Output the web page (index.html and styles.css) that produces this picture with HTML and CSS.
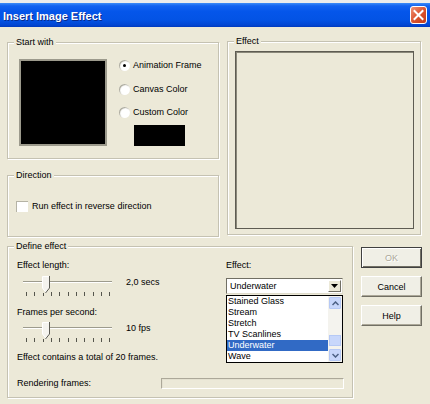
FILE: index.html
```html
<!DOCTYPE html>
<html lang="en">
<head>
    <meta charset="UTF-8">
    <title>Insert Image Effect</title>
    <link rel="stylesheet" href="styles.css">
</head>
<body>
    <div class="window">
        <div class="top-strip"></div>
        <div class="titlebar">
            <span class="title">Insert Image Effect</span>
            <svg class="close-btn" width="17" height="18" viewBox="0 0 17 18">
                <defs>
                    <linearGradient id="closeGrad" x1="0" y1="0" x2="1" y2="1">
                        <stop offset="0" stop-color="#f0957a"/>
                        <stop offset="0.5" stop-color="#dc5530"/>
                        <stop offset="1" stop-color="#c23a17"/>
                    </linearGradient>
                </defs>
                <rect x="0.5" y="0.5" width="16" height="17" rx="2.5" fill="url(#closeGrad)" stroke="#fff"/>
                <path d="M4.5 5 L12.5 13 M12.5 5 L4.5 13" stroke="#fff" stroke-width="2" stroke-linecap="square"/>
            </svg>
        </div>

        <div class="main">
            <div class="row">
                <div class="col-left">
                    <div class="group start-group">
                        <span class="group-label">Start with</span>
                        <div class="preview"></div>
                        <div class="radio-list">
                            <div class="radio-row"><span class="radio checked"></span>Animation Frame</div>
                            <div class="radio-row"><span class="radio"></span>Canvas Color</div>
                            <div class="radio-row"><span class="radio"></span>Custom Color</div>
                            <div class="swatch"></div>
                        </div>
                    </div>
                    <div class="group direction-group">
                        <span class="group-label">Direction</span>
                        <div class="check-row"><span class="checkbox"></span>Run effect in reverse direction</div>
                    </div>
                </div>
                <div class="group effect-group">
                    <span class="group-label">Effect</span>
                    <div class="effect-frame"></div>
                </div>
            </div>

            <div class="row row-bottom">
                <div class="group define-group">
                    <span class="group-label">Define effect</span>
                    <div class="define-body">
                        <div class="define-left">
                            <p class="label">Effect length:</p>
                            <div class="slider-row">
                                <svg class="slider" width="92" height="22" viewBox="0 0 92 22">
                                    <line x1="0" y1="6.5" x2="89" y2="6.5" stroke="#9d9b8d"/>
                                    <line x1="0" y1="7.5" x2="89" y2="7.5" stroke="#fff"/>
                                    <path d="M19.5 1.5 H26.5 V13 L23 17.5 L19.5 13 Z" fill="#f4f3ee" stroke="#fff"/>
                                    <path d="M26.5 1 V13 L22.5 18" fill="none" stroke="#5a5a52"/>
                                    <g stroke="#55554d">
                                        <line x1="3.5" y1="17" x2="3.5" y2="21"/>
                                        <line x1="11.5" y1="17" x2="11.5" y2="21"/>
                                        <line x1="20.5" y1="18" x2="20.5" y2="21"/>
                                        <line x1="28.5" y1="17" x2="28.5" y2="21"/>
                                        <line x1="36.5" y1="17" x2="36.5" y2="21"/>
                                        <line x1="45.5" y1="17" x2="45.5" y2="21"/>
                                        <line x1="53.5" y1="17" x2="53.5" y2="21"/>
                                        <line x1="61.5" y1="17" x2="61.5" y2="21"/>
                                        <line x1="70.5" y1="17" x2="70.5" y2="21"/>
                                        <line x1="78.5" y1="17" x2="78.5" y2="21"/>
                                        <line x1="86.5" y1="17" x2="86.5" y2="21"/>
                                    </g>
                                </svg>
                                <span class="slider-value">2,0 secs</span>
                            </div>
                            <p class="label label-fps">Frames per second:</p>
                            <div class="slider-row slider-row-tight">
                                <svg class="slider" width="92" height="22" viewBox="0 0 92 22">
                                    <line x1="0" y1="6.5" x2="89" y2="6.5" stroke="#9d9b8d"/>
                                    <line x1="0" y1="7.5" x2="89" y2="7.5" stroke="#fff"/>
                                    <path d="M19.5 1.5 H26.5 V13 L23 17.5 L19.5 13 Z" fill="#f4f3ee" stroke="#fff"/>
                                    <path d="M26.5 1 V13 L22.5 18" fill="none" stroke="#5a5a52"/>
                                    <g stroke="#55554d">
                                        <line x1="3.5" y1="17" x2="3.5" y2="21"/>
                                        <line x1="11.5" y1="17" x2="11.5" y2="21"/>
                                        <line x1="20.5" y1="18" x2="20.5" y2="21"/>
                                        <line x1="28.5" y1="17" x2="28.5" y2="21"/>
                                        <line x1="36.5" y1="17" x2="36.5" y2="21"/>
                                        <line x1="45.5" y1="17" x2="45.5" y2="21"/>
                                        <line x1="53.5" y1="17" x2="53.5" y2="21"/>
                                        <line x1="61.5" y1="17" x2="61.5" y2="21"/>
                                        <line x1="70.5" y1="17" x2="70.5" y2="21"/>
                                        <line x1="78.5" y1="17" x2="78.5" y2="21"/>
                                        <line x1="86.5" y1="17" x2="86.5" y2="21"/>
                                    </g>
                                </svg>
                                <span class="slider-value">10 fps</span>
                            </div>
                            <p class="label label-total">Effect contains a total of 20 frames.</p>
                        </div>
                        <div class="define-right">
                            <p class="label">Effect:</p>
                            <div class="combo">
                                <span class="combo-text">Underwater</span>
                                <span class="combo-btn">
                                    <svg width="7" height="4" viewBox="0 0 7 4"><path d="M0 0 H7 L3.5 4 Z" fill="#000"/></svg>
                                </span>
                            </div>
                            <div class="dropdown">
                                <ul class="options">
                                    <li>Stained Glass</li>
                                    <li>Stream</li>
                                    <li>Stretch</li>
                                    <li>TV Scanlines</li>
                                    <li class="selected">Underwater</li>
                                    <li>Wave</li>
                                </ul>
                                <div class="scrollbar">
                                    <div class="scroll-btn">
                                        <svg width="7" height="5" viewBox="0 0 7 5"><path d="M0.5 4 L3.5 1 L6.5 4" fill="none" stroke="#4d6185" stroke-width="1.5"/></svg>
                                    </div>
                                    <div class="scroll-track"><div class="scroll-thumb"></div></div>
                                    <div class="scroll-btn">
                                        <svg width="7" height="5" viewBox="0 0 7 5"><path d="M0.5 1 L3.5 4 L6.5 1" fill="none" stroke="#4d6185" stroke-width="1.5"/></svg>
                                    </div>
                                </div>
                            </div>
                        </div>
                    </div>
                    <div class="render-row">
                        <span class="label">Rendering frames:</span>
                        <div class="progress"></div>
                    </div>
                </div>

                <div class="buttons">
                    <button class="btn btn-default" disabled>OK</button>
                    <button class="btn">Cancel</button>
                    <button class="btn">Help</button>
                </div>
            </div>
        </div>
    </div>
</body>
</html>
```

FILE: styles.css
```css
* {
    box-sizing: border-box;
    margin: 0;
    padding: 0;
}

body {
    font-family: "Liberation Sans", Arial, sans-serif;
    font-size: 9px;
    line-height: 12px;
    color: #000;
    background-color: #ece9d8;
}

.window {
    width: 430px;
    height: 404px;
    overflow: hidden;
}

.top-strip {
    height: 3px;
    background-color: #ececec;
}

.titlebar {
    display: flex;
    align-items: center;
    height: 24px;
    padding: 0 3px;
    background: linear-gradient(to bottom, #3d8cf7 0%, #1262f0 12%, #0556ea 35%, #0353e5 70%, #0246d2 92%, #0039bd 100%);
}

.title {
    color: #fff;
    font-size: 11px;
    font-weight: bold;
    text-shadow: 1px 1px 0 #0a2a8a;
    margin-top: 1px;
}

.close-btn {
    display: block;
    margin-left: auto;
}

.main {
    padding: 14px 0 0 7px;
}

.row {
    display: flex;
    gap: 8px;
}

.row-bottom {
    margin-top: 9px;
}

.col-left {
    display: flex;
    flex-direction: column;
    gap: 16px;
    width: 212px;
    margin-top: 1px;
}

.group {
    position: relative;
    border: 1px solid #c5c2b2;
    box-shadow: inset 1px 1px 0 #fff, 1px 1px 0 #fff;
}

.group-label {
    position: absolute;
    top: -7px;
    left: 6px;
    padding: 0 2px;
    background-color: #ece9d8;
}

/* start with */
.start-group {
    display: flex;
    height: 117px;
    padding: 16px 0 0 11px;
}

.preview {
    width: 88px;
    height: 87px;
    background-color: #000;
    border: 2px solid #9c9a8c;
}

.radio-list {
    margin-left: 12px;
}

.radio-row {
    display: flex;
    align-items: center;
    height: 12px;
    margin-bottom: 12px;
    white-space: nowrap;
}

.radio-row:nth-child(2) {
    margin-bottom: 11px;
}

.radio-row:nth-child(3) {
    margin-bottom: 7px;
}

.radio {
    position: relative;
    width: 11px;
    height: 11px;
    margin-right: 3px;
    border-radius: 50%;
    background-color: #fff;
    box-shadow: inset 1px 1px 1px #a8a698;
}

.radio.checked::after {
    content: "";
    position: absolute;
    top: 4px;
    left: 4px;
    width: 3px;
    height: 3px;
    border-radius: 50%;
    background-color: #000;
}

.swatch {
    width: 51px;
    height: 21px;
    margin-left: 15px;
    background-color: #000;
}

/* direction */
.direction-group {
    height: 62px;
    padding: 24px 0 0 8px;
}

.check-row {
    display: flex;
    align-items: center;
}

.checkbox {
    width: 12px;
    height: 11px;
    margin-right: 4px;
    background-color: #fff;
    box-shadow: inset 1px 1px 0 #b5b3a5;
}

/* effect preview */
.effect-group {
    width: 194px;
    height: 194px;
    padding: 9px 0 0 7px;
}

.effect-frame {
    width: 179px;
    height: 178px;
    border: 1px solid #5e5c52;
    box-shadow: inset 1px 1px 0 #8a887a;
}

/* define effect */
.define-group {
    width: 346px;
    height: 152px;
    padding: 12px 0 0 9px;
}

.define-body {
    display: flex;
}

.define-left {
    width: 209px;
}

.slider-row {
    display: flex;
    align-items: flex-start;
    margin-top: 4px;
}

.slider-row-tight {
    margin-top: 3px;
}

.slider {
    display: block;
    margin-left: 6px;
}

.slider-value {
    margin-left: 11px;
    margin-top: 1px;
}

.label-fps {
    margin-top: 9px;
}

.label-total {
    margin-top: 8px;
}

.render-row {
    display: flex;
    align-items: center;
    width: 327px;
    margin-top: 14px;
    white-space: nowrap;
}

.progress {
    width: 183px;
    height: 11px;
    margin-left: auto;
    border: 1px solid #aca899;
    border-right-color: #fff;
    border-bottom-color: #fff;
    box-shadow: inset 1px 1px 0 #e4e1d0;
}

.define-right {
    width: 117px;
}

.combo {
    display: flex;
    align-items: center;
    height: 16px;
    margin-top: 7px;
    padding: 1px;
    background-color: #fff;
    border: 1px solid #716f64;
    border-right-color: #dedbcb;
    border-bottom-color: #dedbcb;
}

.combo-text {
    flex: 1;
    padding-left: 2px;
}

.combo-btn {
    display: flex;
    align-items: center;
    justify-content: center;
    width: 13px;
    height: 12px;
    background-color: #ece9d8;
    border: 1px solid #fff;
    border-right-color: #716f64;
    border-bottom-color: #716f64;
}

.dropdown {
    display: flex;
    height: 68px;
    margin-top: 1px;
    background-color: #fff;
    border: 1px solid #000;
}

.options {
    flex: 1;
    list-style: none;
}

.options li {
    height: 11px;
    line-height: 11px;
    padding-left: 1px;
}

.options .selected {
    background-color: #316ac5;
    color: #fff;
}

.scrollbar {
    display: flex;
    flex-direction: column;
    width: 14px;
    padding: 1px;
    background-color: #f4f3ee;
}

.scroll-btn {
    display: flex;
    align-items: center;
    justify-content: center;
    height: 12px;
    background-color: #c8d7fb;
    border: 1px solid #b6c9f5;
    border-radius: 1px;
}

.scroll-track {
    flex: 1;
    padding-top: 26px;
}

.scroll-thumb {
    height: 11px;
    background-color: #c8d7fb;
    border: 1px solid #b6c9f5;
}

/* buttons */
.buttons {
    display: flex;
    flex-direction: column;
    gap: 8px;
    margin-top: 1px;
}

.btn {
    width: 61px;
    height: 21px;
    font-family: inherit;
    font-size: 9px;
    color: #000;
    background-color: #f0efe6;
    border: 1px solid #fff;
    border-right-color: #716f64;
    border-bottom-color: #716f64;
    box-shadow: inset -1px -1px 0 #aca899;
}

.btn-default {
    border: 1px solid #404040;
    box-shadow: inset 1px 1px 0 #fff, inset -1px -1px 0 #716f64;
}

.btn:disabled {
    color: #aca899;
    text-shadow: 1px 1px 0 #fff;
}
```
